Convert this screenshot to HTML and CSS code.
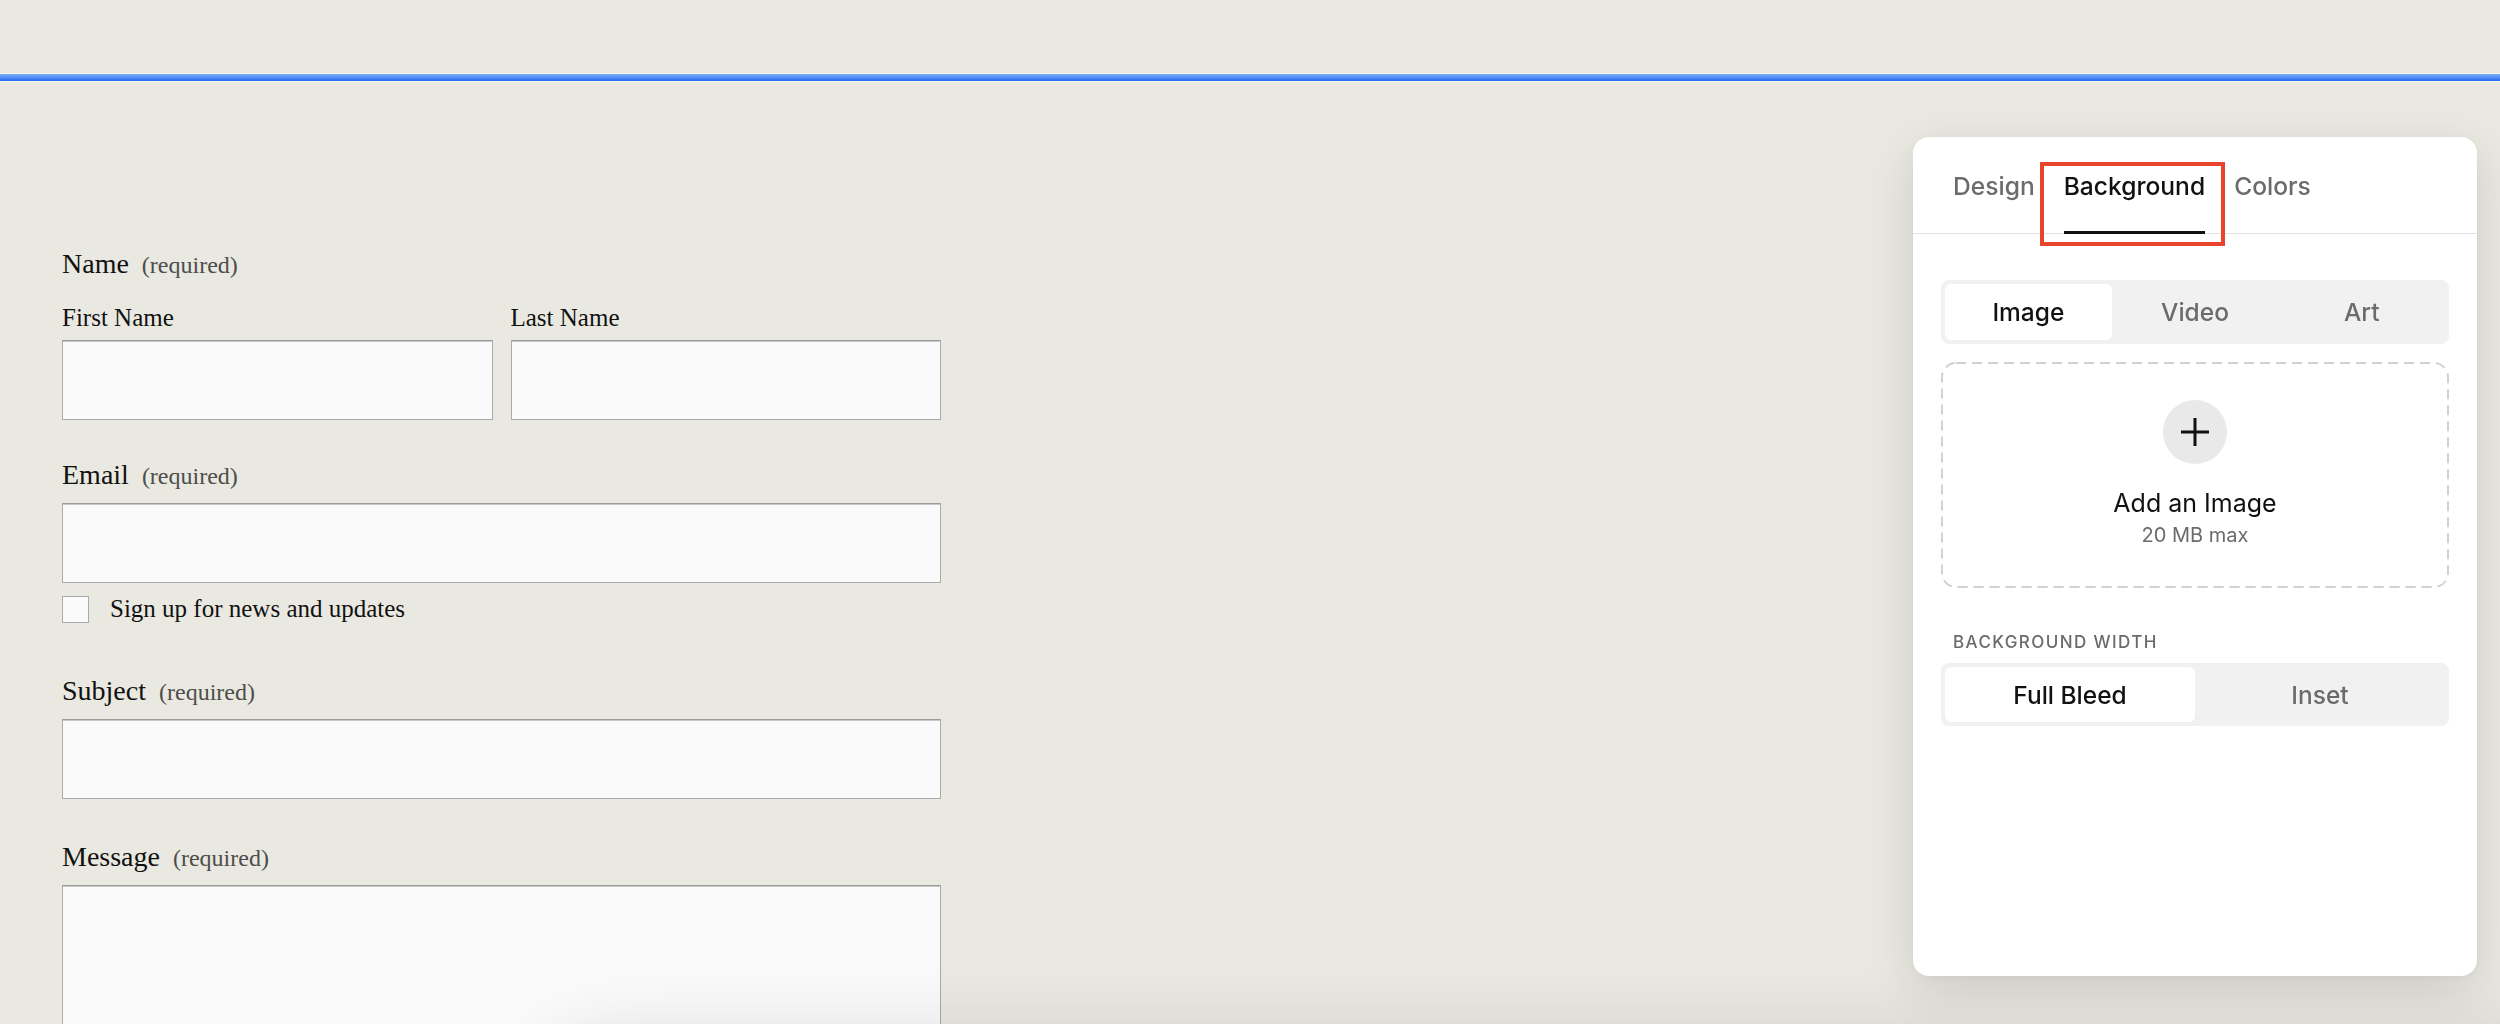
FILE: index.html
```html
<!DOCTYPE html>
<html lang="en">
<head>
  <meta charset="UTF-8" />
  <meta name="viewport" content="width=device-width, initial-scale=1.0" />
  <title>Contact Form - Section Background</title>
  <link rel="stylesheet" href="styles.css">
</head>
<body>
  <div class="topbar"><div class="edit-line"></div></div>

  <div class="page">
    <form class="contact-form">
      <div class="field">
        <div class="field-label">Name<span class="req">(required)</span></div>
        <div class="name-grid">
          <div>
            <label class="sub-label" for="fname">First Name</label>
            <input class="text-input" type="text" id="fname">
          </div>
          <div>
            <label class="sub-label" for="lname">Last Name</label>
            <input class="text-input" type="text" id="lname">
          </div>
        </div>
      </div>

      <div class="field has-check">
        <label class="field-label" for="email">Email<span class="req">(required)</span></label>
        <input class="text-input" type="email" id="email">
        <label class="check-row">
          <input class="checkbox" type="checkbox">
          Sign up for news and updates
        </label>
      </div>

      <div class="field subject">
        <label class="field-label" for="subject">Subject<span class="req">(required)</span></label>
        <input class="text-input" type="text" id="subject">
      </div>

      <div class="field">
        <label class="field-label" for="message">Message<span class="req">(required)</span></label>
        <textarea class="text-input message" id="message"></textarea>
      </div>
    </form>

    <aside class="panel">
      <div class="tabs">
        <div class="tab">Design</div>
        <div class="tab active">Background<span class="highlight"></span></div>
        <div class="tab">Colors</div>
      </div>

      <div class="segmented">
        <div class="seg active">Image</div>
        <div class="seg">Video</div>
        <div class="seg">Art</div>
      </div>

      <div class="dropzone">
        <svg class="dash" width="508" height="226" viewBox="0 0 508 226">
          <rect x="1" y="1" width="506" height="224" rx="14" ry="14" fill="none" stroke="#d2d2d2" stroke-width="2" stroke-dasharray="10 6"/>
        </svg>
        <div class="add-circle">
          <svg width="28" height="28" viewBox="0 0 28 28">
            <path d="M14 0V28M0 14H28" stroke="#111" stroke-width="3" fill="none"/>
          </svg>
        </div>
        <div class="add-title">Add an Image</div>
        <div class="add-sub">20 MB max</div>
      </div>

      <div class="section-label">BACKGROUND WIDTH</div>
      <div class="segmented width">
        <div class="seg active">Full Bleed</div>
        <div class="seg">Inset</div>
      </div>
    </aside>
  </div>

  <div class="bottom-shade"></div>
</body>
</html>
```

FILE: styles.css
```css
html, body {
  height: 100%;
  overflow: hidden;
}
body {
  margin: 0;
  background: #eae9e1;
  color: #111;
  font-family: "Liberation Serif", "Times New Roman", serif;
}
.topbar {
  padding-top: 74px;
}
.edit-line {
  height: 7px;
  background: linear-gradient(#7eacf8, #5591f5 45%, #2268ee);
  box-shadow: 0 1px 0 rgba(255, 255, 255, 0.6), 0 -1px 0 rgba(255, 255, 255, 0.5);
}
.page {
  display: flex;
  justify-content: space-between;
  align-items: flex-start;
  padding: 0 23px 0 62px;
}

/* form */
.contact-form {
  width: 879px;
  padding-top: 167px;
}
.field {
  margin-bottom: 39px;
}
.field.has-check {
  margin-bottom: 51px;
}
.field.subject {
  margin-bottom: 42px;
}
.field-label {
  display: block;
  font-size: 28px;
  line-height: 32px;
  margin-bottom: 11px;
}
.req {
  font-size: 24px;
  color: #4d4d4d;
  margin-left: 13px;
}
.name-grid {
  display: grid;
  grid-template-columns: 1fr 1fr;
  gap: 18px;
  margin-top: 22px;
}
.sub-label {
  display: block;
  font-size: 25px;
  line-height: 30px;
  margin-bottom: 7px;
}
.text-input {
  display: block;
  width: 100%;
  height: 80px;
  box-sizing: border-box;
  margin: 0;
  border: 1px solid #a9a9a9;
  border-top-color: #9a9a9a;
  border-radius: 0;
  background: #fafafa;
  box-shadow: inset 0 1px 0 #c9c9c9;
  font-family: inherit;
}
.text-input.message {
  height: 260px;
  resize: none;
}
.check-row {
  display: flex;
  align-items: center;
  gap: 21px;
  margin-top: 11px;
  font-size: 25px;
  line-height: 30px;
}
.checkbox {
  appearance: none;
  width: 27px;
  height: 27px;
  margin: 0;
  border: 1px solid #a9a9a9;
  background: #fafafa;
}

/* panel */
.panel {
  position: relative;
  z-index: 2;
  width: 564px;
  height: 839px;
  margin-top: 56px;
  background: #fff;
  border-radius: 16px;
  box-shadow: 0 14px 50px rgba(0, 0, 0, 0.13), 0 2px 8px rgba(0, 0, 0, 0.04);
  font-family: Inter, "Noto Sans", sans-serif;
}
.tabs {
  display: flex;
  gap: 29px;
  height: 97px;
  padding: 0 40px;
  box-sizing: border-box;
  border-bottom: 1px solid #e3e3e3;
}
.tab {
  position: relative;
  padding-top: 34px;
  font-size: 24.6px;
  line-height: 30px;
  font-weight: 500;
  color: #6b6b6b;
}
.tab.active {
  color: #111;
}
.tab.active::after {
  content: "";
  position: absolute;
  left: 0;
  right: 0;
  bottom: -1px;
  height: 3px;
  background: #111;
}
.highlight {
  position: absolute;
  left: -24px;
  right: -20px;
  top: 25px;
  bottom: -13px;
  border: 4px solid #e8442c;
}
.segmented {
  display: flex;
  height: 64px;
  margin: 46px 28px 0;
  padding: 4px;
  box-sizing: border-box;
  background: #f1f1f1;
  border-radius: 8px;
}
.segmented.width {
  height: 63px;
  margin-top: 11px;
}
.seg {
  flex: 1;
  display: flex;
  align-items: center;
  justify-content: center;
  font-size: 24.5px;
  font-weight: 500;
  color: #6b6b6b;
  border-radius: 6px;
}
.seg.active {
  background: #fff;
  color: #111;
}
.dropzone {
  position: relative;
  display: flex;
  flex-direction: column;
  align-items: center;
  height: 226px;
  margin: 18px 28px 0;
  padding-top: 38px;
  box-sizing: border-box;
}
.dash {
  position: absolute;
  top: 0;
  left: 0;
}
.add-circle {
  display: flex;
  align-items: center;
  justify-content: center;
  width: 64px;
  height: 64px;
  border-radius: 50%;
  background: #e9e9e9;
}
.add-title {
  margin-top: 24px;
  font-size: 25px;
  line-height: 30px;
  color: #111;
}
.add-sub {
  margin-top: 5px;
  font-size: 20px;
  line-height: 24px;
  color: #6b6b6b;
}
.section-label {
  margin: 44px 40px 0;
  font-size: 17px;
  line-height: 20px;
  font-weight: 500;
  letter-spacing: 1.4px;
  color: #6b6b6b;
}

/* shadow of the toolbar sitting just under the fold */
.bottom-shade {
  position: fixed;
  z-index: 1;
  left: 540px;
  right: -80px;
  top: 1040px;
  height: 300px;
  border-radius: 70px;
  background: #eae9e1;
  box-shadow: 0 0 80px rgba(0, 0, 0, 0.14);
}
```
